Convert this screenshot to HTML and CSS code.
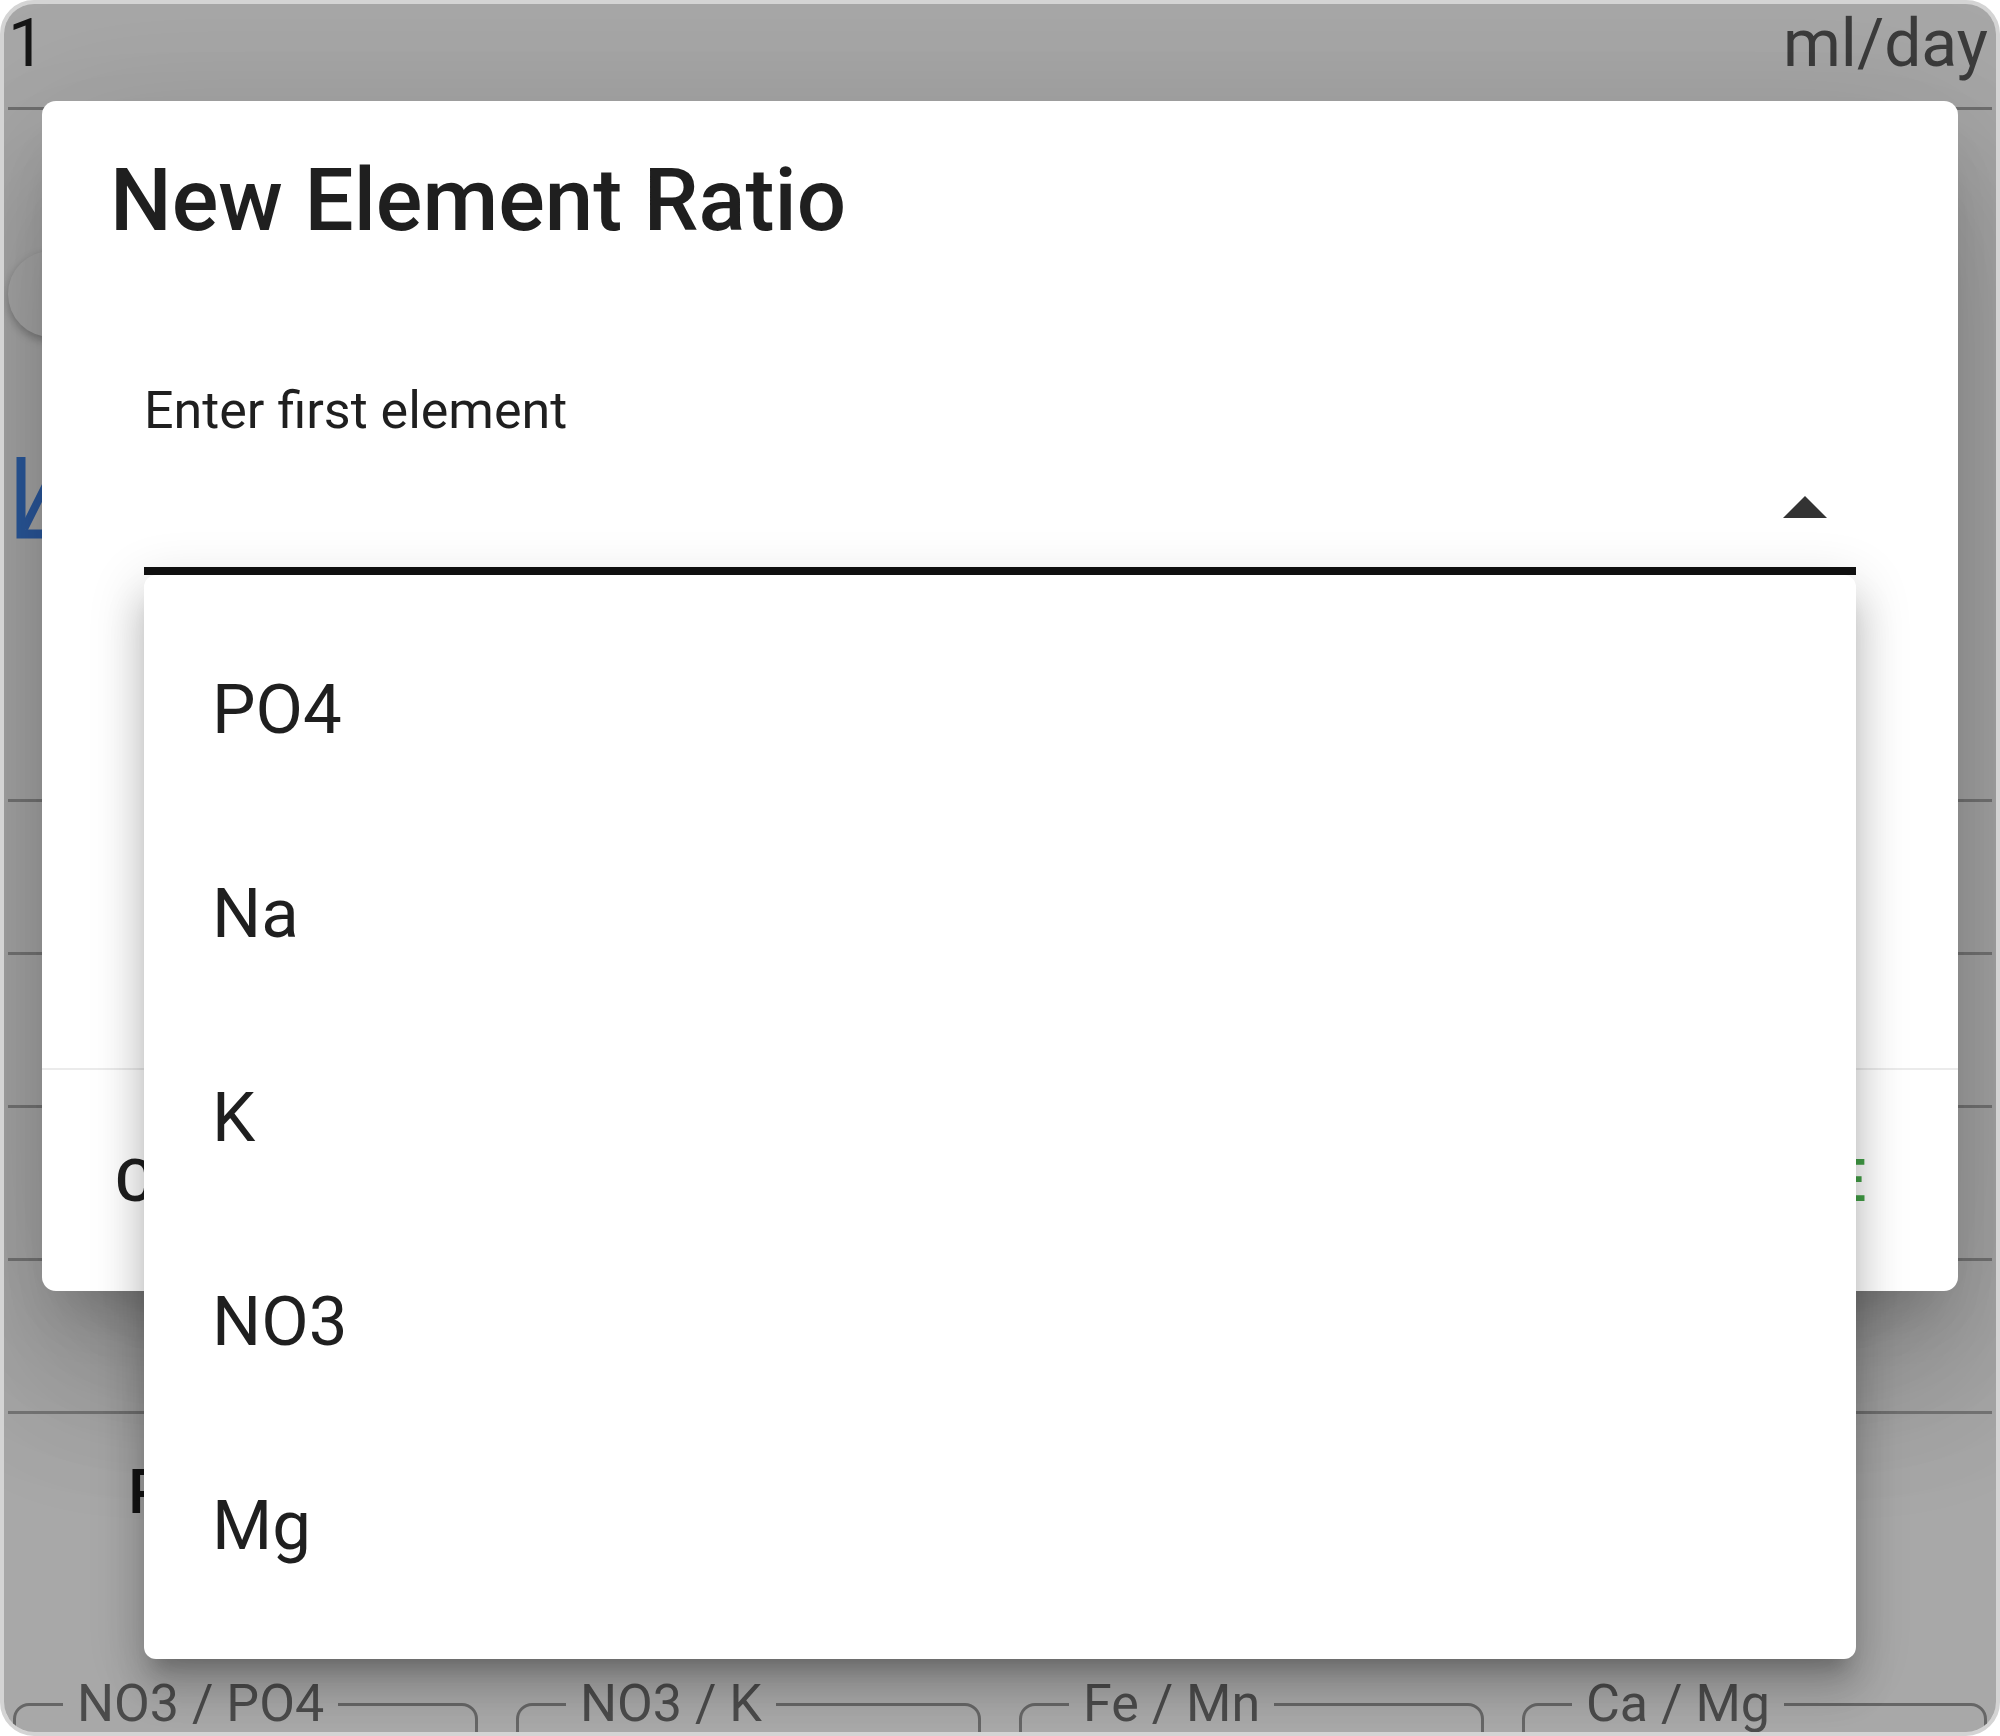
FILE: index.html
```html
<!DOCTYPE html>
<html lang="en">
<head>
<meta charset="utf-8">
<title>New Element Ratio</title>
<link rel="stylesheet" href="styles.css">
</head>
<body>
<div class="frame">
  <div class="app">
    <div class="topbar">
      <span class="qty">1</span>
      <span class="unit">ml/day</span>
    </div>
    <div class="hero">
      <div class="fab"></div>
      <svg class="chart-icon" width="80" height="82" viewBox="0 0 80 82">
        <path d="M5 0 V77 H80" fill="none" stroke="#4288f0" stroke-width="9"/>
        <path d="M8 72 L32 24 L50 52 L78 6" fill="none" stroke="#4288f0" stroke-width="8"/>
      </svg>
    </div>
    <div class="row"></div>
    <div class="row"></div>
    <div class="row"></div>
    <div class="row"></div>
    <div class="lastrow"><span class="rowtext">Preset ratios</span></div>
    <div class="ratios">
      <fieldset class="ratio"><legend>NO3 / PO4</legend></fieldset>
      <fieldset class="ratio"><legend>NO3 / K</legend></fieldset>
      <fieldset class="ratio"><legend>Fe / Mn</legend></fieldset>
      <fieldset class="ratio"><legend>Ca / Mg</legend></fieldset>
    </div>
  </div>
  <div class="scrim"></div>
  <div class="dialog">
    <h1 class="dialog-title">New Element Ratio</h1>
    <div class="dialog-body">
      <div class="field">
        <div class="field-label">Enter first element</div>
        <div class="field-input">
          <svg class="drop-arrow" width="44" height="22" viewBox="0 0 44 22"><path d="M0 22 L22 0 L44 22 Z" fill="#333333"/></svg>
        </div>
        <ul class="menu">
          <li class="menu-item">PO4</li>
          <li class="menu-item">Na</li>
          <li class="menu-item">K</li>
          <li class="menu-item">NO3</li>
          <li class="menu-item">Mg</li>
        </ul>
      </div>
    </div>
    <div class="dialog-actions">
      <span class="btn btn-cancel">CANCEL</span>
      <span class="btn btn-save">SAVE</span>
    </div>
  </div>
</div>
</body>
</html>
```
FILE: styles.css
```css
html, body {
  margin: 0;
  padding: 0;
  background: #ffffff;
}

.frame {
  position: relative;
  width: 2000px;
  height: 1736px;
  box-sizing: border-box;
  border: 4px solid #d4d4d4;
  border-radius: 34px;
  overflow: hidden;
  background: #ffffff;
  font-family: Roboto, "Liberation Sans", sans-serif;
}

.app {
  display: flex;
  flex-direction: column;
}

.topbar {
  display: flex;
  justify-content: space-between;
  align-items: flex-start;
  height: 106px;
  padding: 1px 4px 0 0;
  box-sizing: border-box;
  font-size: 66px;
  line-height: 77px;
  border-bottom: 3px solid #aaaaaa;
  margin: 0 4px;
}

.qty { color: #222222; }
.unit { color: #5c5c5c; }

.hero {
  height: 692px;
  margin: 0 4px;
  border-bottom: 3px solid #b4b4b4;
  display: flex;
  flex-direction: column;
  align-items: flex-start;
  padding-top: 141px;
  box-sizing: border-box;
}

.fab {
  width: 86px;
  height: 86px;
  border-radius: 50%;
  background: #ffffff;
  box-shadow: 0 4px 10px rgba(0, 0, 0, 0.28);
}

.chart-icon {
  margin-top: 120px;
  margin-left: 8px;
}

.row {
  height: 153px;
  box-sizing: border-box;
  margin: 0 4px;
  border-bottom: 3px solid #b4b4b4;
}

.lastrow {
  height: 264px;
  padding: 47px 0 0 124px;
  box-sizing: border-box;
  font-size: 62px;
  line-height: 62px;
  color: #222222;
  font-weight: 500;
}

.ratios {
  display: grid;
  grid-template-columns: repeat(4, 1fr);
  gap: 38px;
  padding: 0 9px;
}

.ratio {
  margin: 0;
  padding: 0;
  height: 160px;
  border: 3px solid #9c9c9c;
  border-radius: 16px;
  min-width: 0;
}

.ratio legend {
  margin-left: 47px;
  padding: 0 14px;
  font-size: 52px;
  line-height: 52px;
  color: #727272;
}

.scrim {
  position: absolute;
  inset: 0;
  background: rgba(0, 0, 0, 0.34);
}

.dialog {
  position: absolute;
  left: 38px;
  top: 97px;
  width: 1916px;
  height: 1190px;
  background: #ffffff;
  border-radius: 14px;
  display: flex;
  flex-direction: column;
  box-shadow: 0 40px 56px -26px rgba(0, 0, 0, 0.22),
              0 90px 142px 11px rgba(0, 0, 0, 0.14),
              0 34px 172px 30px rgba(0, 0, 0, 0.10);
}

.dialog-title {
  margin: 0;
  padding: 56px 0 0 68px;
  font-size: 87px;
  line-height: 87px;
  font-weight: 500;
  color: #1f1f1f;
}

.dialog-body {
  flex: 1;
  padding: 141px 102px 0 102px;
}

.field {
  position: relative;
}

.field-label {
  font-size: 52px;
  line-height: 52px;
  color: #1f1f1f;
}

.field-input {
  height: 120px;
  border-bottom: 8px solid #111111;
  display: flex;
  justify-content: flex-end;
  align-items: center;
  padding-right: 29px;
  padding-top: 10px;
  box-sizing: content-box;
}

.drop-arrow {
  display: block;
}

.menu {
  position: absolute;
  left: 0;
  right: 0;
  top: 100%;
  margin: 0;
  padding: 32px 0 32px 0;
  list-style: none;
  background: #ffffff;
  border-radius: 12px;
  box-shadow: 0 19px 19px -11px rgba(0, 0, 0, 0.2),
              0 30px 38px 4px rgba(0, 0, 0, 0.14),
              0 11px 52px 8px rgba(0, 0, 0, 0.12);
  z-index: 2;
}

.menu-item {
  height: 204px;
  display: flex;
  align-items: center;
  padding-left: 68px;
  font-size: 69px;
  color: #1f1f1f;
}

.dialog-actions {
  height: 221px;
  border-top: 2px solid #ebebeb;
  display: flex;
  justify-content: space-between;
  align-items: center;
  padding: 0 90px 0 73px;
}

.btn {
  font-size: 59px;
  font-weight: 500;
  letter-spacing: 2px;
}

.btn-cancel { color: #1f1f1f; }
.btn-save { color: #43a047; }
```
